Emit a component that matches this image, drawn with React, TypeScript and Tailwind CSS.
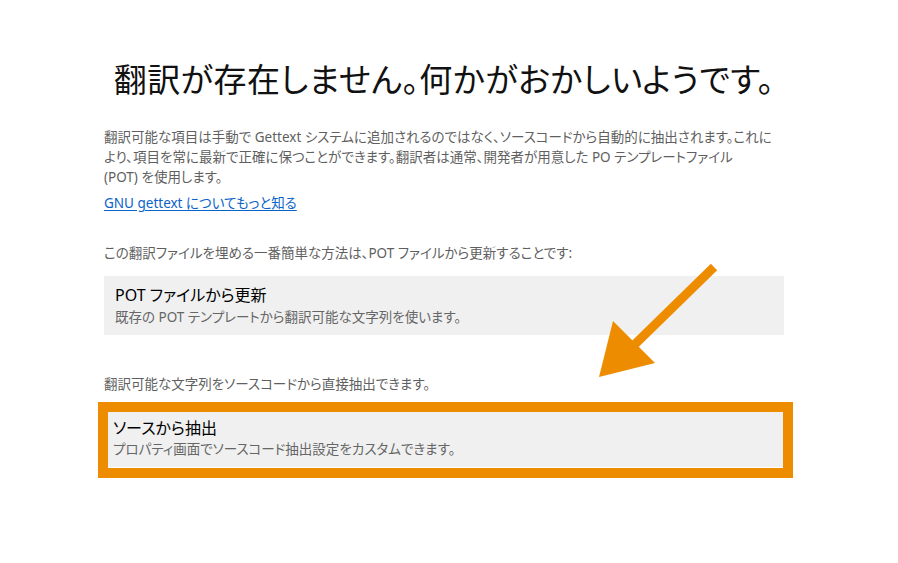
import React from 'react';

const font = "font-['Noto_Sans','Noto_Sans_CJK_JP',sans-serif] [font-feature-settings:'palt']";

function ActionBox({ title, desc }: { title: string; desc: string }) {
  return (
    <div className="bg-[#f0f0f0] h-[59px] pt-[7px] px-[11px]">
      <div className="text-[16px] leading-[24px] text-black">{title}</div>
      <div className="text-[13.5px] leading-[20px] text-[#666666]">{desc}</div>
    </div>
  );
}

export default function App() {
  return (
    <div className={`relative min-h-screen w-[898px] h-[563px] bg-white overflow-hidden ${font}`}>
      <div className="ml-[104px] w-[680px] pt-[58px]">
        <h1 className="text-center text-[33px] leading-[44px] tracking-[0.5px] text-[#111111] whitespace-nowrap">
          翻訳が存在しません。何かがおかしいようです。
        </h1>

        <p className="mt-[25px] text-[13.5px] leading-[20px] text-[#5f5f5f] whitespace-nowrap">
          翻訳可能な項目は手動で Gettext システムに追加されるのではなく、ソースコードから自動的に抽出されます。これに
          <br />
          より、項目を常に最新で正確に保つことができます。翻訳者は通常、開発者が用意した PO テンプレートファイル
          <br />
          (POT) を使用します。
        </p>

        <a href="#" className="mt-[6px] inline-block text-[13.5px] leading-[20px] text-[#0a63c9] underline underline-offset-2">
          GNU gettext についてもっと知る
        </a>

        <p className="mt-[29px] text-[13.5px] leading-[20px] text-[#5f5f5f]">
          この翻訳ファイルを埋める一番簡単な方法は、POT ファイルから更新することです:
        </p>

        <div className="mt-[13px]">
          <ActionBox title="POT ファイルから更新" desc="既存の POT テンプレートから翻訳可能な文字列を使います。" />
        </div>

        <p className="mt-[39px] text-[13.5px] leading-[20px] text-[#5f5f5f]">
          翻訳可能な文字列をソースコードから直接抽出できます。
        </p>

        <div className="mt-[8px] -ml-[6px] w-[695px] border-[10px] border-[#ee8c00]">
          <div className="bg-[#f0f0f0] h-[56px] pt-[5px] px-[5px] border-b border-white">
            <div className="text-[16px] leading-[22px] text-black">ソースから抽出</div>
            <div className="text-[13.5px] leading-[20px] text-[#666666]">プロパティ画面でソースコード抽出設定をカスタムできます。</div>
          </div>
        </div>
      </div>

      <svg className="absolute left-0 top-0 pointer-events-none" width="898" height="563" viewBox="0 0 898 563">
        <line x1="714" y1="267" x2="628" y2="351" stroke="#ee8c00" strokeWidth="9" />
        <polygon points="599,377 613,321 655,363" fill="#ee8c00" />
      </svg>
    </div>
  );
}
